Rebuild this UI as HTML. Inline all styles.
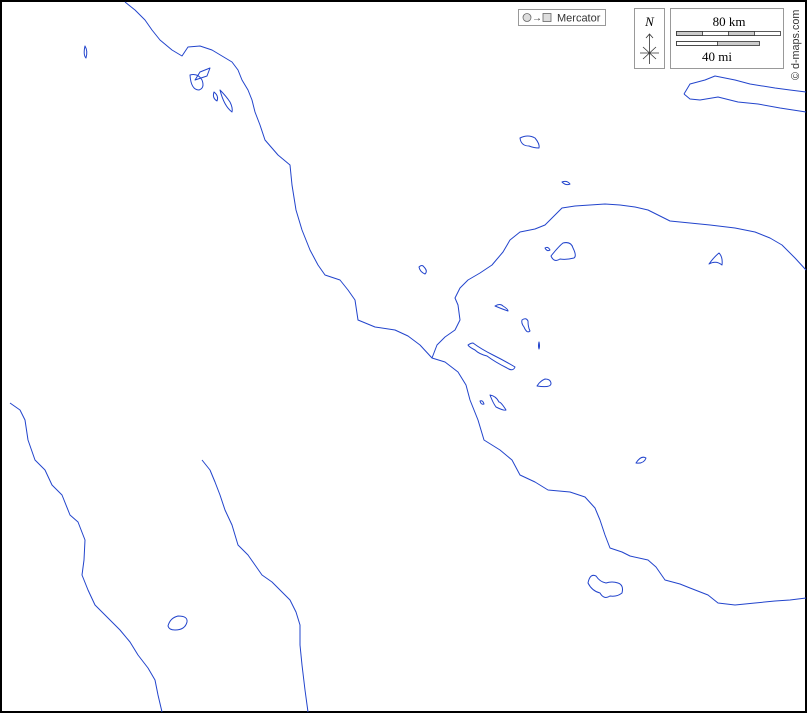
<!DOCTYPE html>
<html><head><style>
html,body{margin:0;padding:0;background:#fff}
.wrap{position:relative;width:807px;height:713px;overflow:hidden}
svg{position:absolute;left:0;top:0}
</style></head><body><div class="wrap">
<svg width="807" height="713" viewBox="0 0 807 713" font-family="Liberation Serif, serif">
<rect x="1" y="1" width="805" height="711" fill="#fff" stroke="#000" stroke-width="2"/>
<g fill="none" stroke="#2244cc" stroke-width="1" stroke-linejoin="round">
<polyline points="125,2 135,10 145,20 152,30 160,40 172,50 182,56 188,47 200,46 212,50 222,56 232,62 238,70 242,80 248,90 252,100 255,112 260,125 265,140 278,155 290,165 292,185 296,210 302,230 310,250 318,265 325,275 340,280 348,290 355,300 358,320 375,327 395,330 408,336 420,345 432,358 445,362 458,372 466,385 470,400 478,420 484,440 500,450 512,460 520,475 535,482 548,490 570,492 585,497 595,508 600,520 605,535 610,548 622,552 630,556 648,560 656,567 665,580 680,584 690,588 708,595 718,603 735,605 755,603 775,601 790,600 806,598"/>
<polyline points="432,358 437,345 445,337 455,330 460,320 458,305 455,298 460,288 468,280 480,273 492,265 503,252 510,240 520,232 535,229 545,225 555,215 562,208 575,206 590,205 605,204 620,205 635,207 648,210 660,216 670,221 690,223 710,225 735,228 755,232 770,238 782,245 795,258 806,270"/>
<polyline points="10,403 20,410 25,420 28,440 35,460 45,470 52,485 62,495 70,515 78,522 85,540 84,560 82,575 88,590 95,605 108,618 120,630 130,642 138,655 148,668 155,680 158,695 162,712"/>
<polyline points="202,460 210,470 215,482 220,495 225,510 232,525 238,545 248,555 255,565 262,575 272,582 282,592 290,600 296,612 300,625 300,645 302,665 305,690 308,712"/>
<polyline points="684,94 690,84 705,80 715,76 735,80 750,84 775,88 790,90 806,92"/>
<polyline points="684,94 690,99 700,100 718,97 738,102 758,104 780,108 806,112"/>
<path d="M195,80 l5,-8 l10,-4 l-3,8 z"/>
<path d="M190,75 q8,-2 12,5 q3,8 -3,10 q-8,0 -9,-15z"/>
<path d="M214,92 q5,4 3,9 q-5,-3 -3,-9z"/>
<path d="M220,90 q6,6 10,12 q3,6 2,10 q-8,-6 -12,-22z"/>
<path d="M85,46 q3,5 1,12 q-3,-3 -1,-12z"/>
<path d="M520,138 q8,-4 15,0 q5,6 4,10 q-5,0 -10,-2 q-8,0 -9,-8z"/>
<path d="M562,182 q5,-2 8,2 q-4,2 -8,-2z"/>
<path d="M551,256 q8,-10 12,-13 q8,-2 10,5 q4,8 1,10 q-8,2 -14,1 q-6,4 -9,-3z"/>
<path d="M545,248 q3,-2 5,2 q-3,2 -5,-2z"/>
<path d="M419,267 q3,-3 5,0 q4,4 1,7 q-5,-2 -6,-7z"/>
<path d="M495,306 q5,-3 8,0 q5,3 5,5 q-6,-2 -13,-5z"/>
<path d="M522,320 q4,-3 6,1 q0,6 2,10 q-3,3 -6,-4 q-3,-4 -2,-7z"/>
<path d="M539,342 q1,4 0,7 q-1,-3 0,-7z"/>
<path d="M468,345 q3,-2 5,-2 q8,6 20,12 q12,6 22,12 q-2,5 -8,1 q-12,-6 -20,-12 q-8,-2 -12,-6 q-6,-3 -7,-5z"/>
<path d="M537,386 q3,-5 8,-7 q6,0 6,5 q-1,4 -14,2z"/>
<path d="M490,395 q3,8 6,12 q8,4 10,3 q-5,-8 -7,-8 q-3,-6 -9,-7z"/>
<path d="M480,401 q3,-1 4,3 q-3,1 -4,-3z"/>
<path d="M636,463 q5,-8 10,-5 q-2,6 -10,5z"/>
<path d="M709,264 q5,-7 10,-11 q4,4 3,12 q-6,-5 -13,-1z"/>
<path d="M588,583 q2,-10 8,-7 q4,6 10,7 q6,-2 12,0 q6,2 4,10 q-5,4 -12,3 q-6,4 -10,-3 q-8,-2 -12,-10z"/>
<path d="M168,626 q2,-8 10,-10 q10,0 9,6 q-2,8 -12,8 q-6,0 -7,-4z"/>
</g>
<g font-family="Liberation Sans, sans-serif">
<rect x="518.5" y="9.5" width="87" height="16" fill="#fff" stroke="#999"/>
<circle cx="527" cy="17.5" r="4" fill="#ddd" stroke="#666" stroke-width="0.8"/>
<text x="532" y="21" font-size="10" fill="#333">→</text>
<rect x="543" y="13.5" width="8" height="8" fill="#ddd" stroke="#666" stroke-width="0.8"/>
<text x="557" y="21.5" font-size="11" fill="#333">Mercator</text>
</g>
<rect x="634.5" y="8.5" width="30" height="60" fill="#fff" stroke="#999"/>
<text x="649.5" y="26" font-size="13" font-style="italic" text-anchor="middle">N</text>
<g stroke="#333" stroke-width="0.8" fill="none">
<line x1="649.5" y1="34" x2="649.5" y2="64"/>
<polyline points="646,38 649.5,34 653,38"/>
<line x1="640" y1="53" x2="659" y2="53"/>
<line x1="643" y1="47" x2="656" y2="59"/>
<line x1="656" y1="47" x2="643" y2="59"/>
</g>
<rect x="670.5" y="8.5" width="113" height="60" fill="#fff" stroke="#999"/>
<text x="729" y="26" font-size="13" text-anchor="middle">80 km</text>
<g stroke="#333" stroke-width="0.8">
<rect x="676.5" y="31.5" width="104" height="4" fill="#fff"/>
<rect x="676.5" y="31.5" width="26" height="4" fill="#ccc"/>
<rect x="728.5" y="31.5" width="26" height="4" fill="#ccc"/>
<rect x="676.5" y="41.5" width="83" height="4" fill="#ccc"/>
<rect x="676.5" y="41.5" width="41" height="4" fill="#fff"/>
</g>
<text x="717" y="61" font-size="13" text-anchor="middle">40 mi</text>
<text transform="translate(799,80) rotate(-90)" font-family="Liberation Sans, sans-serif" font-size="10.8" fill="#333">© d-maps.com</text>
</svg>
</div></body></html>
